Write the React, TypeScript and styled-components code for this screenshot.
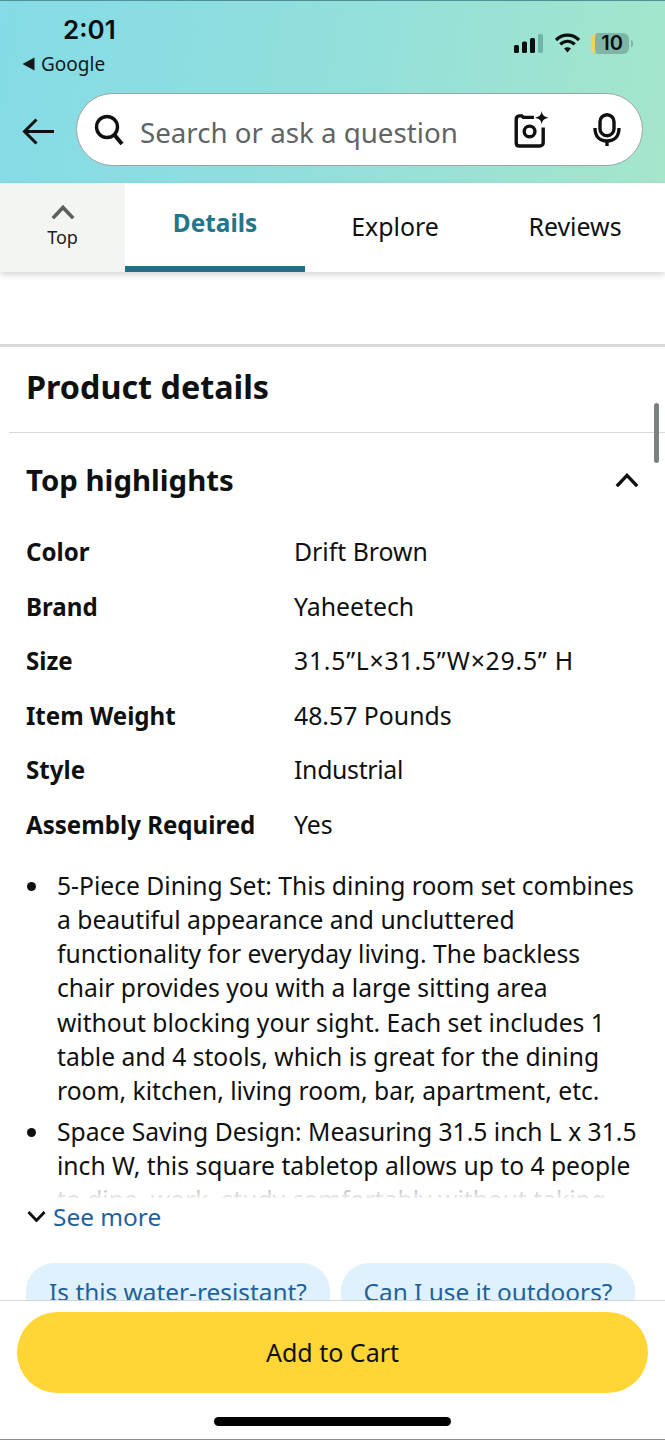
import React from 'react';
import styled, { createGlobalStyle } from 'styled-components';

const GlobalStyle = createGlobalStyle`
  html, body { margin: 0; padding: 0; background: #fff; }
  * { box-sizing: border-box; }
  body { font-family: "Noto Sans", "Liberation Sans", sans-serif; color: #0f1111; }
`;

const Page = styled.div`
  width: 665px;
  height: 1440px;
  display: flex;
  flex-direction: column;
  overflow: hidden;
  position: relative;
  background: #fff;
`;

const Header = styled.header`
  height: 183px;
  flex: none;
  border-top: 1px solid #4f8f96;
  background: linear-gradient(100deg, #85dbe6 0%, #92dfdc 50%, #a5e6cb 100%);
  display: flex;
  flex-direction: column;
`;

const StatusBar = styled.div`
  height: 92px;
  display: flex;
  justify-content: space-between;
`;

const StatusLeft = styled.div`
  padding: 12px 0 0 22px;
  display: flex;
  flex-direction: column;
`;

const Time = styled.div`
  font-family: Inter, sans-serif;
  font-size: 26px;
  line-height: 34px;
  font-weight: 600;
  color: #0b0f10;
  padding-left: 41px;
`;

const BackApp = styled.div`
  display: flex;
  align-items: center;
  gap: 6px;
  font-size: 19px;
  line-height: 28px;
  margin-top: 3px;
  color: #13191a;
`;

const StatusRight = styled.div`
  display: flex;
  align-items: flex-start;
  gap: 10px;
  padding: 31px 36px 0 0;
`;

const Battery = styled.div`
  width: 38px;
  height: 21px;
  margin-top: 1px;
  border-radius: 6px;
  background: #7fb5a7;
  border-left: 4px solid #f0d35a;
  font-family: Inter, sans-serif;
  font-size: 20px;
  font-weight: 600;
  line-height: 21px;
  color: #0b0f10;
  display: flex;
  align-items: center;
  justify-content: center;
  position: relative;
  &::after {
    content: '';
    position: absolute;
    right: -4px;
    top: 7px;
    width: 2px;
    height: 7px;
    border-radius: 0 2px 2px 0;
    background: #7fb5a7;
  }
`;

const SearchRow = styled.div`
  display: flex;
  align-items: center;
  gap: 22px;
  padding-left: 22px;
`;

const ArrowSlot = styled.div`
  display: flex;
  margin-top: 4px;
`;

const SearchBox = styled.div`
  width: 567px;
  height: 73px;
  border-radius: 37px;
  background: #fff;
  border: 1px solid #9aa5a5;
  display: flex;
  align-items: center;
  padding-left: 17px;
`;

const Placeholder = styled.div`
  flex: 1;
  margin-left: 16px;
  padding-top: 5px;
  font-size: 27.7px;
  color: #5f6464;
`;

const IconButton = styled.div<{ $right: number }>`
  display: flex;
  margin-right: ${p => p.$right}px;
`;

const Tabs = styled.nav`
  height: 89px;
  flex: none;
  display: flex;
  background: #fff;
  box-shadow: 0 3px 6px rgba(0, 0, 0, 0.16);
  position: relative;
`;

const TopTab = styled.div`
  width: 125px;
  background: #f3f5f3;
  display: flex;
  flex-direction: column;
  align-items: center;
  gap: 6px;
  padding-top: 22px;
  font-size: 18px;
  line-height: 24px;
  color: #1b2020;
`;

const Tab = styled.div<{ $active?: boolean; $width: number }>`
  width: ${p => p.$width}px;
  display: flex;
  justify-content: center;
  padding-top: ${p => (p.$active ? 23 : 26)}px;
  font-size: ${p => (p.$active ? 24.4 : 24.9)}px;
  line-height: 34px;
  font-weight: ${p => (p.$active ? 700 : 400)};
  color: ${p => (p.$active ? '#23758a' : '#0f1111')};
  border-bottom: 6px solid ${p => (p.$active ? '#1f7186' : 'transparent')};
`;

const Content = styled.main`
  flex: 1;
  overflow: hidden;
  padding-top: 72px;
  position: relative;
`;

const SectionRule = styled.div`
  height: 3px;
  background: #d9dada;
`;

const Title = styled.h1`
  margin: 0;
  padding: 18px 26px 0;
  height: 85px;
  font-size: 32.3px;
  line-height: 42px;
  font-weight: 700;
  color: #0f1111;
`;

const InsetRule = styled.div`
  height: 1px;
  margin-left: 9px;
  background: #d5d6d6;
`;

const HighlightsHead = styled.div`
  display: flex;
  justify-content: space-between;
  align-items: center;
  padding: 17px 26px 0;
  height: 77px;
`;

const SubTitle = styled.h2`
  margin: 0;
  font-size: 29.4px;
  line-height: 40px;
  font-weight: 700;
`;

const SpecTable = styled.div`
  margin-top: 24px;
  padding-left: 26px;
  display: grid;
  grid-template-columns: 268px 1fr;
  grid-auto-rows: 54.6px;
`;

const SpecName = styled.div`
  padding-top: 1px;
  font-size: 24.1px;
  line-height: 34px;
  font-weight: 700;
`;

const SpecValue = styled.div<{ $tracking: number }>`
  font-size: 24.8px;
  line-height: 34px;
  letter-spacing: ${p => p.$tracking}px;
`;

const ClipBox = styled.div`
  position: relative;
  margin-top: 7px;
`;

const Bullets = styled.ul`
  list-style: none;
  margin: 0;
  padding: 0 28px 0 57px;
  height: 329px;
  overflow: hidden;
  display: flex;
  flex-direction: column;
  gap: 6px;
`;

const Bullet = styled.li`
  font-size: 24.65px;
  line-height: 34.3px;
  position: relative;
  &::before {
    content: '';
    position: absolute;
    left: -30px;
    top: 13px;
    width: 9px;
    height: 9px;
    border-radius: 50%;
    background: #0f1111;
  }
`;

const Fade = styled.div`
  position: absolute;
  left: 0;
  right: 0;
  bottom: 0;
  height: 12px;
  background: linear-gradient(rgba(255, 255, 255, 0.65), rgba(255, 255, 255, 0.92));
`;

const SeeMore = styled.div`
  display: flex;
  align-items: center;
  gap: 7px;
  margin-top: 2px;
  padding-left: 27px;
  height: 34px;
  font-size: 24.4px;
  color: #1f6299;
`;

const Chips = styled.div`
  display: flex;
  gap: 11px;
  padding-left: 26px;
  margin-top: 29px;
`;

const Chip = styled.div<{ $width: number }>`
  width: ${p => p.$width}px;
  height: 60px;
  border-radius: 28px;
  background: #dff1fc;
  color: #1f6299;
  font-size: 24.4px;
  text-align: center;
  padding-top: 12px;
  line-height: 34px;
  white-space: nowrap;
`;

const ScrollThumb = styled.div`
  position: absolute;
  right: 6px;
  top: 131px;
  width: 5px;
  height: 60px;
  border-radius: 3px;
  background: #7d8080;
`;

const Footer = styled.footer`
  height: 140px;
  flex: none;
  background: #fff;
  border-top: 1px solid #d5d6d6;
  padding: 11px 17px 0;
  display: flex;
  flex-direction: column;
  align-items: center;
  position: relative;
`;

const CartButton = styled.div`
  width: 631px;
  height: 81px;
  border-radius: 41px;
  background: #ffd635;
  display: flex;
  align-items: center;
  justify-content: center;
  padding-bottom: 1px;
  font-size: 25px;
  color: #0f1111;
`;

const HomeBar = styled.div`
  width: 237px;
  height: 9px;
  border-radius: 5px;
  background: #000;
  margin-top: 24px;
`;

const BottomEdge = styled.div`
  position: absolute;
  left: 0;
  right: 0;
  bottom: 0;
  height: 1px;
  background: #8d8d8d;
`;

const specs = [
  { name: 'Color', value: 'Drift Brown', tracking: 0 },
  { name: 'Brand', value: 'Yaheetech', tracking: 0 },
  { name: 'Size', value: '31.5”L×31.5”W×29.5” H', tracking: 0.75 },
  { name: 'Item Weight', value: '48.57 Pounds', tracking: 0 },
  { name: 'Style', value: 'Industrial', tracking: -0.3 },
  { name: 'Assembly Required', value: 'Yes', tracking: 0 },
];

function SignalIcon() {
  return (
    <svg width="30" height="22" viewBox="0 0 30 22">
      <rect x="0" y="13" width="5" height="8" rx="1.5" fill="#0b0f10" />
      <rect x="8" y="9.5" width="5" height="11.5" rx="1.5" fill="#0b0f10" />
      <rect x="16" y="6" width="5" height="15" rx="1.5" fill="#0b0f10" />
      <rect x="24" y="2" width="5" height="19" rx="1.5" fill="#6fb3a9" />
    </svg>
  );
}

function WifiIcon() {
  return (
    <svg width="27" height="22" viewBox="0 0 26 22" fill="none" stroke="#0b0f10" strokeWidth="3.2">
      <path d="M1.5 8 C8 1.5 18 1.5 24.5 8" />
      <path d="M5.8 12.4 C10 8.2 16 8.2 20.2 12.4" />
      <path d="M13 20.5 L9.6 16.6 C11.6 14.9 14.4 14.9 16.4 16.6 Z" fill="#0b0f10" stroke="none" />
    </svg>
  );
}

function BackArrow() {
  return (
    <svg width="32" height="27" viewBox="0 0 32 27" fill="none" stroke="#0f1111" strokeWidth="3">
      <path d="M32 13.5 H3 M14.5 1.5 L2.5 13.5 L14.5 25.5" />
    </svg>
  );
}

function SearchIcon() {
  return (
    <svg width="30" height="32" viewBox="0 0 30 32" fill="none" stroke="#0f1111" strokeWidth="3.4">
      <circle cx="13" cy="13" r="10.5" />
      <path d="M20.5 21 L28 30" strokeWidth="4" />
    </svg>
  );
}

function CameraIcon() {
  return (
    <svg width="36" height="37" viewBox="0 0 36 38" fill="none" stroke="#0f1111" strokeWidth="3.5">
      <path d="M20 6.5 H9 L7.5 5 H5 A3.5 3.5 0 0 0 1.8 8.5 V32.5 A3.5 3.5 0 0 0 5 36 H26 A3.5 3.5 0 0 0 29.5 32.5 V17" />
      <circle cx="15.5" cy="21" r="5.5" />
      <path d="M28 0 C28.8 4.5 30 5.8 35 7 C30 8.2 28.8 9.5 28 14 C27.2 9.5 26 8.2 21 7 C26 5.8 27.2 4.5 28 0 Z" fill="#0f1111" stroke="none" />
    </svg>
  );
}

function MicIcon() {
  return (
    <svg width="28" height="34" viewBox="0 0 28 34" fill="none" stroke="#0f1111" strokeWidth="3.4">
      <rect x="7" y="1.7" width="14" height="21" rx="7" />
      <path d="M2 15 C2 24 7 28 14 28 C21 28 26 24 26 15" />
      <path d="M14 28 V33" />
    </svg>
  );
}

function Chevron({ up, size, color, stroke }: { up?: boolean; size: number; color: string; stroke: number }) {
  return (
    <svg width={size} height={size * 0.6} viewBox="0 0 20 12" fill="none" stroke={color} strokeWidth={stroke}>
      <path d={up ? 'M1.5 11 L10 2 L18.5 11' : 'M1.5 1 L10 10 L18.5 1'} />
    </svg>
  );
}

function BackTriangle() {
  return (
    <svg width="13" height="14" viewBox="0 0 13 14">
      <path d="M0.5 7 L12.5 0.5 V13.5 Z" fill="#13191a" />
    </svg>
  );
}

export default function App() {
  return (
    <Page>
      <GlobalStyle />
      <Header>
        <StatusBar>
          <StatusLeft>
            <Time>2:01</Time>
            <BackApp><BackTriangle />Google</BackApp>
          </StatusLeft>
          <StatusRight>
            <SignalIcon />
            <WifiIcon />
            <Battery>10</Battery>
          </StatusRight>
        </StatusBar>
        <SearchRow>
          <ArrowSlot><BackArrow /></ArrowSlot>
          <SearchBox>
            <SearchIcon />
            <Placeholder>Search or ask a question</Placeholder>
            <IconButton $right={43}><CameraIcon /></IconButton>
            <IconButton $right={21}><MicIcon /></IconButton>
          </SearchBox>
        </SearchRow>
      </Header>
      <Tabs>
        <TopTab>
          <Chevron up size={24} color="#5b5f5f" stroke={3} />
          Top
        </TopTab>
        <Tab $active $width={180}>Details</Tab>
        <Tab $width={180}>Explore</Tab>
        <Tab $width={180}>Reviews</Tab>
      </Tabs>
      <Content>
        <SectionRule />
        <Title>Product details</Title>
        <InsetRule />
        <HighlightsHead>
          <SubTitle>Top highlights</SubTitle>
          <Chevron up size={24} color="#0f1111" stroke={2.8} />
        </HighlightsHead>
        <SpecTable>
          {specs.map(spec => (
            <React.Fragment key={spec.name}>
              <SpecName>{spec.name}</SpecName>
              <SpecValue $tracking={spec.tracking}>{spec.value}</SpecValue>
            </React.Fragment>
          ))}
        </SpecTable>
        <ClipBox>
          <Bullets>
            <Bullet>5-Piece Dining Set: This dining room set combines a beautiful appearance and uncluttered functionality for everyday living. The backless chair provides you with a large sitting area without blocking your sight. Each set includes 1 table and 4 stools, which is great for the dining room, kitchen, living room, bar, apartment, etc.</Bullet>
            <Bullet>Space Saving Design: Measuring 31.5 inch L x 31.5 inch W, this square tabletop allows up to 4 people to dine, work, study comfortably without taking</Bullet>
          </Bullets>
          <Fade />
        </ClipBox>
        <SeeMore>
          <Chevron size={19} color="#0f1111" stroke={3} />
          See more
        </SeeMore>
        <Chips>
          <Chip $width={304}>Is this water-resistant?</Chip>
          <Chip $width={294}>Can I use it outdoors?</Chip>
        </Chips>
        <ScrollThumb />
      </Content>
      <Footer>
        <CartButton>Add to Cart</CartButton>
        <HomeBar />
        <BottomEdge />
      </Footer>
    </Page>
  );
}
